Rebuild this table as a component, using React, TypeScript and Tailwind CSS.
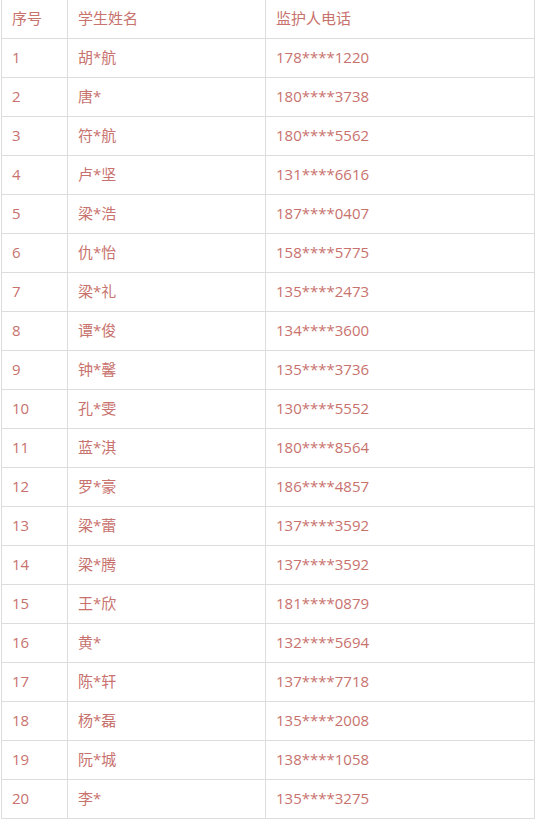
const rows: [string, string, string][] = [
  ["1", "胡*航", "178****1220"],
  ["2", "唐*", "180****3738"],
  ["3", "符*航", "180****5562"],
  ["4", "卢*坚", "131****6616"],
  ["5", "梁*浩", "187****0407"],
  ["6", "仇*怡", "158****5775"],
  ["7", "梁*礼", "135****2473"],
  ["8", "谭*俊", "134****3600"],
  ["9", "钟*馨", "135****3736"],
  ["10", "孔*雯", "130****5552"],
  ["11", "蓝*淇", "180****8564"],
  ["12", "罗*豪", "186****4857"],
  ["13", "梁*蕾", "137****3592"],
  ["14", "梁*腾", "137****3592"],
  ["15", "王*欣", "181****0879"],
  ["16", "黄*", "132****5694"],
  ["17", "陈*轩", "137****7718"],
  ["18", "杨*磊", "135****2008"],
  ["19", "阮*城", "138****1058"],
  ["20", "李*", "135****3275"],
];

function Row({ cells }: { cells: [string, string, string] }) {
  return (
    <div className="flex h-[39px] border-b border-[#dddddd]">
      <div className="flex w-[66px] items-center border-r border-[#dddddd] pb-px pl-[10px]">
        {cells[0]}
      </div>
      <div className="flex w-[198px] items-center border-r border-[#dddddd] pb-px pl-[10px]">
        {cells[1]}
      </div>
      <div className="flex flex-1 items-center pb-px pl-[10px]">{cells[2]}</div>
    </div>
  );
}

export default function App() {
  return (
    <div className="min-h-screen bg-white">
      <div
        className="ml-px w-[534px] border-x border-[#dddddd] text-[15px] text-[#c8726e]"
        style={{ fontFamily: '"Open Sans", "Noto Sans CJK SC", sans-serif' }}
      >
        <Row cells={["序号", "学生姓名", "监护人电话"]} />
        {rows.map((r) => (
          <Row key={r[0]} cells={r} />
        ))}
      </div>
    </div>
  );
}
